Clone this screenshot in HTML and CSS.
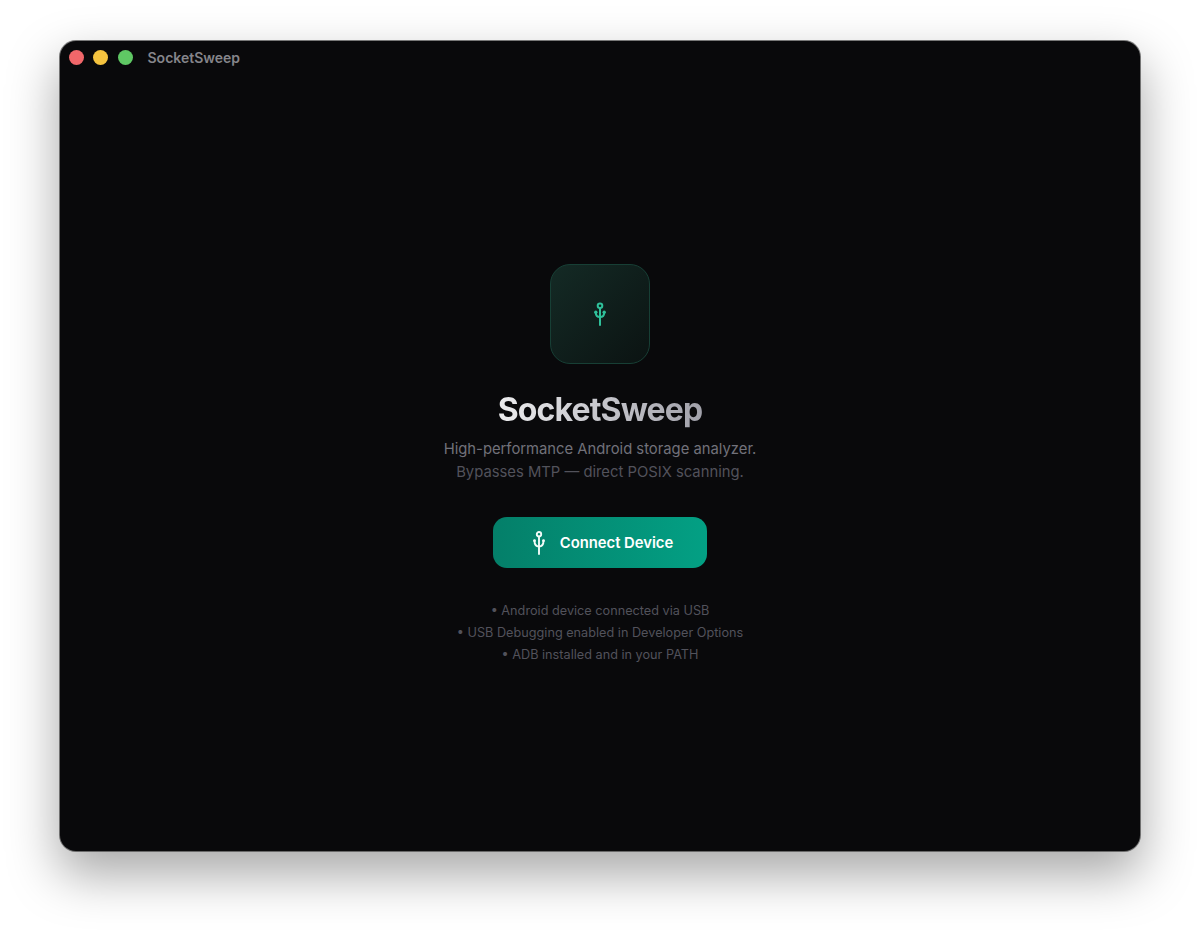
FILE: index.html
```html
<!DOCTYPE html>
<html>
<head>
  <meta charset="UTF-8">
  <title>SocketSweep</title>
  <link rel="stylesheet" href="styles.css">
</head>
<body>
<div class="window">
  <div class="titlebar">
    <span class="dot dot-red"></span>
    <span class="dot dot-yellow"></span>
    <span class="dot dot-green"></span>
    <span class="app-name">SocketSweep</span>
  </div>
  <div class="main">
    <div class="logo">
      <svg class="usb usb-small" viewBox="0 0 24 24">
        <circle cx="12" cy="3.7" r="2.3"/>
        <path d="M12 6V23"/>
        <path d="M7.8 10.5C7.8 13.5 9.5 15 12 15C14.5 15 16.2 13.5 16.2 10.5"/>
        <circle class="tip" cx="7.8" cy="10.3" r="1.7"/>
        <circle class="tip" cx="16.2" cy="10.3" r="1.7"/>
      </svg>
    </div>
    <h1 class="title">SocketSweep</h1>
    <p class="sub">High-performance Android storage analyzer.</p>
    <p class="sub sub-dim">Bypasses MTP — direct POSIX scanning.</p>
    <button class="connect">
      <svg class="usb usb-btn" viewBox="0 0 24 24">
        <circle cx="12" cy="3.2" r="2.2"/>
        <path d="M12 5.5V23"/>
        <path d="M7.5 9.8C7.5 13.5 9.5 15.5 12 15.5C14.5 15.5 16.5 13.5 16.5 9.8"/>
        <circle class="tip" cx="7.5" cy="9.7" r="1.4"/>
        <circle class="tip" cx="16.5" cy="9.7" r="1.4"/>
      </svg>
      Connect Device
    </button>
    <ul class="reqs">
      <li>• Android device connected via USB</li>
      <li>• USB Debugging enabled in Developer Options</li>
      <li>• ADB installed and in your PATH</li>
    </ul>
  </div>
</div>
</body>
</html>
```

FILE: styles.css
```css
body {
  margin: 0;
  padding: 41px 60px 0;
  height: 930px;
  box-sizing: border-box;
  overflow: hidden;
  background: #fff;
  font-family: Inter, "Liberation Sans", sans-serif;
}
.window {
  display: flex;
  flex-direction: column;
  height: 810px;
  box-sizing: border-box;
  background: #09090b;
  border-radius: 16px;
  box-shadow: 0 0 0 1px rgba(70,70,70,.7), 0 22px 50px 2px rgba(0,0,0,.34);
}
.titlebar {
  display: flex;
  align-items: center;
  height: 32px;
  padding: 0 8.5px;
}
.dot {
  width: 15px;
  height: 15px;
  margin-right: 9.5px;
  border-radius: 50%;
}
.dot-red { background: #f1676a; }
.dot-yellow { background: #f5c33f; }
.dot-green { background: #5fc864; }
.app-name {
  margin-left: 5.5px;
  font-size: 14px;
  font-weight: 600;
  color: #85858a;
}
.main {
  flex: 1;
  display: flex;
  flex-direction: column;
  align-items: center;
  justify-content: center;
  padding-top: 5px;
}
.logo {
  display: flex;
  align-items: center;
  justify-content: center;
  width: 100px;
  height: 100px;
  box-sizing: border-box;
  margin: 1px 0 26px;
  border: 1px solid #173f35;
  border-radius: 20px;
  background: linear-gradient(135deg, #142a25, #0b1312);
}
.usb {
  fill: none;
  stroke-linecap: round;
  stroke-linejoin: round;
}
.usb .tip {
  stroke: none;
}
.usb-small {
  width: 24px;
  height: 24px;
  stroke: #2fc09a;
  stroke-width: 2;
}
.usb-small .tip {
  fill: #2fc09a;
}
.usb-btn {
  width: 24px;
  height: 24px;
  margin-right: 9px;
  stroke: #f2fbf8;
  stroke-width: 1.9;
}
.usb-btn .tip {
  fill: #f2fbf8;
}
.title {
  margin: 0 0 8px;
  font-size: 32px;
  line-height: 40px;
  font-weight: 700;
  letter-spacing: -.85px;
  color: transparent;
  background: linear-gradient(90deg, #ececee, #a1a1aa);
  -webkit-background-clip: text;
  background-clip: text;
}
.sub {
  margin: 0;
  font-size: 14.8px;
  line-height: 23px;
  color: #71717a;
}
.sub-dim {
  color: #52525b;
}
.connect {
  display: flex;
  align-items: center;
  justify-content: center;
  width: 214px;
  height: 51px;
  margin-top: 33px;
  border: 0;
  border-radius: 14px;
  background: linear-gradient(90deg, #047f69, #03a084);
  color: #fff;
  font-family: inherit;
  font-size: 14.8px;
  font-weight: 600;
}
.reqs {
  margin: 32px 0 0;
  padding: 0;
  list-style: none;
  text-align: center;
  font-size: 12.7px;
  line-height: 22px;
  color: #52525b;
}
```
